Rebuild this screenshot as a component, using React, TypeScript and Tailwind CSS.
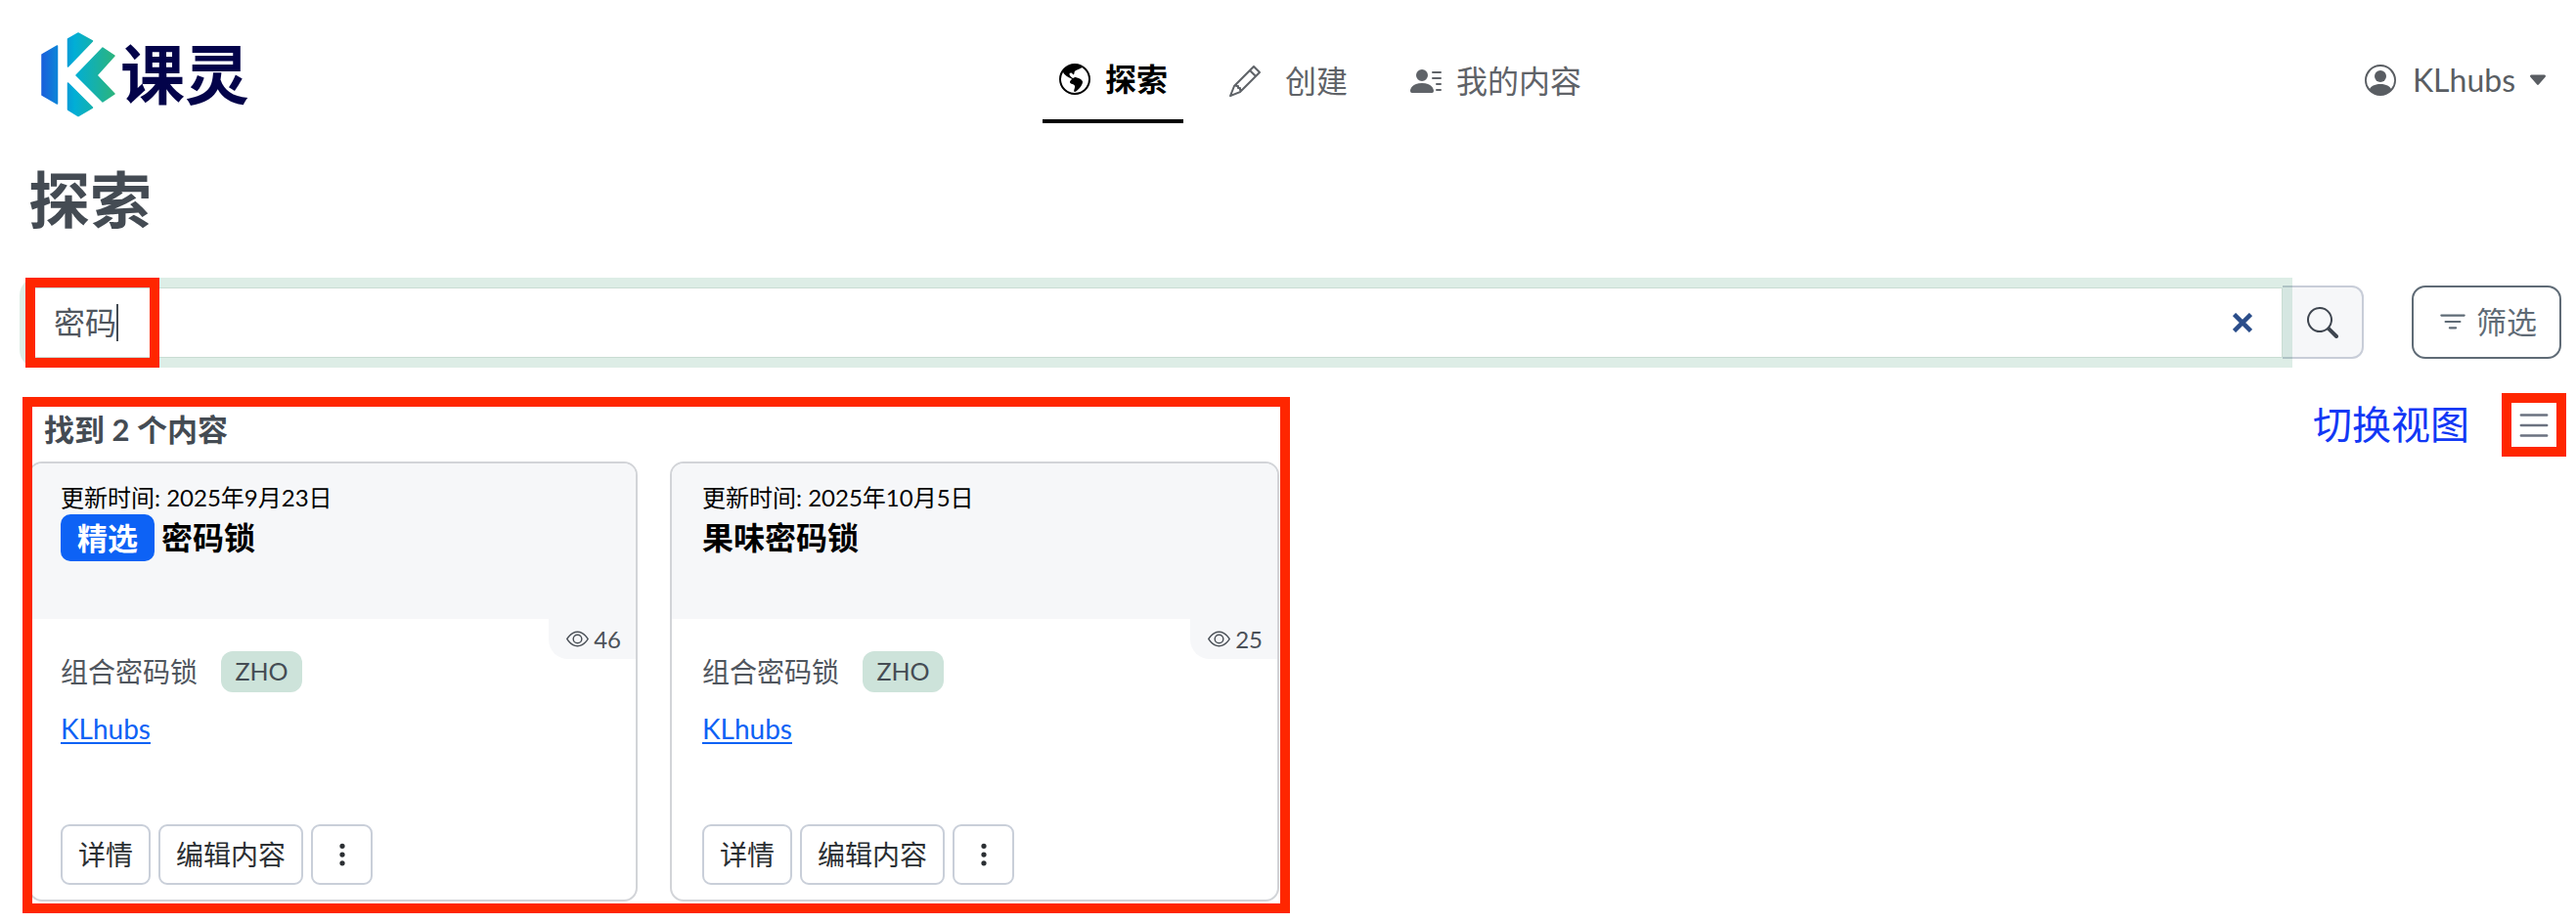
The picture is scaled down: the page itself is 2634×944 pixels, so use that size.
import React from 'react';
import {
  BsCaretDownFill,
  BsEye,
  BsFilter,
  BsGlobeAmericas,
  BsList,
  BsPencil,
  BsPersonCircle,
  BsPersonLinesFill,
  BsSearch,
  BsThreeDotsVertical,
} from 'react-icons/bs';

const Logo = () => (
  <div className="flex items-center ml-[40px] mt-[31px] w-[220px]">
    <svg width="78" height="90" viewBox="38 31 78 90" className="shrink-0">
      <defs>
        <linearGradient id="kl" gradientUnits="userSpaceOnUse" x1="40" y1="0" x2="116" y2="0">
          <stop offset="0" stopColor="#1a5edb" />
          <stop offset="0.45" stopColor="#01aed6" />
          <stop offset="1" stopColor="#2cb47c" />
        </linearGradient>
      </defs>
      <g fill="url(#kl)" stroke="url(#kl)" strokeWidth="1.5" strokeLinejoin="round">
        <polygon points="56.5,47 56.5,106 41,97 41,56" />
        <polygon points="67.5,40 78,34 92.5,42 67.5,68" />
        <polygon points="67.5,85 92.5,110 78,118.5 67.5,112" />
        <polygon points="76,77 103,49 115,57 97,77 115,96 103,104" />
      </g>
    </svg>
    <span className="text-[66px] leading-none font-bold text-[#03034a] ml-[5px] whitespace-nowrap">课灵</span>
  </div>
);

const NavItem = ({ icon, label, active }: { icon: React.ReactNode; label: string; active?: boolean }) => (
  <div
    className={`h-[126px] flex items-center pt-[40px] px-[17px] text-[32px] ${
      active ? 'w-[144px] font-bold text-black border-b-[4px] border-black whitespace-nowrap' : 'text-[#5f6368]'
    }`}
  >
    {icon}
    <span>{label}</span>
  </div>
);

const Card = ({ date, title, views, featured }: { date: string; title: string; views: number; featured?: boolean }) => (
  <div className="w-[623px] h-[450px] border-2 border-[#d2d4d8] rounded-[14px] overflow-hidden flex flex-col bg-white">
    <div className="h-[159px] shrink-0 bg-[#f6f7f9] pl-[31px] pt-[19px]">
      <div className="text-[24px] leading-[32px] text-black">{date}</div>
      <div className="flex items-center h-[48px] mt-[1px]">
        {featured && (
          <span className="w-[96px] h-[48px] mr-[7px] rounded-[10px] bg-[#0d62f5] text-white text-[31px] font-semibold flex items-center justify-center">
            精选
          </span>
        )}
        <span className="text-[32px] font-bold text-black">{title}</span>
      </div>
    </div>
    <div className="relative flex-1 flex flex-col pl-[31px] pb-[15px]">
      <div className="absolute top-0 right-0 w-[89px] h-[41px] bg-[#f6f7f9] rounded-bl-[20px] flex items-center justify-end gap-[5px] pr-[15px] text-[#4b5158] text-[24px]">
        <BsEye size={23} />
        <span>{views}</span>
      </div>
      <div className="flex items-center mt-[33px] h-[42px]">
        <span className="text-[28px] text-[#50565e]">组合密码锁</span>
        <span className="ml-[24px] w-[83px] h-[42px] rounded-[12px] bg-[#cde3da] text-[#454c54] text-[25px] flex items-center justify-center">
          ZHO
        </span>
      </div>
      <a className="mt-[17px] w-fit text-[28px] leading-[40px] text-[#0d62f5] underline underline-offset-[3px]">KLhubs</a>
      <div className="mt-auto flex gap-[8px]">
        <button className="w-[92px] h-[62px] border-2 border-[#c9cfd9] rounded-[9px] text-[28px] text-[#2b2f33]">详情</button>
        <button className="w-[148px] h-[62px] border-2 border-[#c9cfd9] rounded-[9px] text-[28px] text-[#2b2f33]">编辑内容</button>
        <button className="w-[63px] h-[62px] border-2 border-[#c9cfd9] rounded-[9px] text-[#2b2f33] flex items-center justify-center">
          <BsThreeDotsVertical size={28} />
        </button>
      </div>
    </div>
  </div>
);

export default function App() {
  return (
    <div className="w-full h-[944px] overflow-hidden bg-white font-['Lato','Noto_Sans_CJK_SC',sans-serif]">
      {/* header */}
      <header className="flex items-start h-[126px]">
        <Logo />
        <nav className="flex ml-[806px] gap-[30px]">
          <NavItem active label="探索" icon={<BsGlobeAmericas size={32} className="mr-[15px] shrink-0" />} />
          <NavItem label="创建" icon={<BsPencil size={32} className="mr-[25px]" />} />
          <NavItem label="我的内容" icon={<BsPersonLinesFill size={32} className="mr-[15px]" />} />
        </nav>
        <div className="ml-auto mr-[28px] h-[126px] pt-[38px] flex items-center text-[#595d62] text-[32px]">
          <BsPersonCircle size={32} />
          <span className="ml-[17px]">KLhubs</span>
          <BsCaretDownFill size={22} className="ml-[12px]" />
        </div>
      </header>

      <h1 className="ml-[29px] mt-[38px] text-[63px] leading-[80px] font-bold text-[#444b53]">探索</h1>

      {/* search */}
      <div className="flex items-center h-[91px] mt-[40px] pl-[30px]">
        <div className="relative z-10 w-[2304px] h-[72px] bg-white border border-[#c9dcd3] rounded-l-[8px] shadow-[0_0_0_10px_rgba(25,135,84,0.15)] flex items-center pl-[24px]">
          <span className="text-[32px] text-[#50565e]">密码</span>
          <span className="w-[1.5px] h-[38px] bg-[#444b53]" />
          <svg width="20" height="20" viewBox="0 0 20 20" className="absolute left-[2252px] top-[25px]">
            <path d="M1.5 1.5 L18.5 18.5 M18.5 1.5 L1.5 18.5" stroke="#2a4d8a" strokeWidth="4.5" />
          </svg>
          <div className="absolute left-[-5px] top-[-11px] w-[137px] h-[92px] border-[10px] border-[#ff2600]" />
        </div>
        <button className="w-[83px] h-[75px] bg-[#f6f7f9] border-2 border-l-0 border-[#c8cdd8] rounded-r-[12px] flex items-center justify-center text-[#3f4650]">
          <BsSearch size={32} />
        </button>
        <button className="ml-[49px] w-[153px] h-[75px] border-2 border-[#5f6b76] rounded-[14px] flex items-center justify-center gap-[7px] text-[#5f6b76] text-[31px]">
          <BsFilter size={34} />
          筛选
        </button>
      </div>

      {/* results */}
      <div className="flex items-start justify-between mt-[27px]">
        <div className="relative ml-[29px] pt-[19px] w-[1279px]">
          <div className="text-[31px] leading-[36px] font-bold text-[#444b53] pl-[16px] h-[51px]">找到 2 个内容</div>
          <div className="flex gap-[33px]">
            <Card featured date="更新时间: 2025年9月23日" title="密码锁" views={46} />
            <Card date="更新时间: 2025年10月5日" title="果味密码锁" views={25} />
          </div>
          <div className="absolute left-[-6px] top-[4px] right-[-11px] bottom-[-12px] border-[10px] border-[#ff2600] pointer-events-none" />
        </div>
        <div className="flex items-center mr-[10px]">
          <span className="text-[40px] leading-[60px] -mt-[2px] text-[#1238f5]">切换视图</span>
          <div className="ml-[33px] w-[66px] h-[65px] border-[10px] border-[#ff2600] flex items-center justify-center text-[#6b7280]">
            <BsList size={42} />
          </div>
        </div>
      </div>
    </div>
  );
}
